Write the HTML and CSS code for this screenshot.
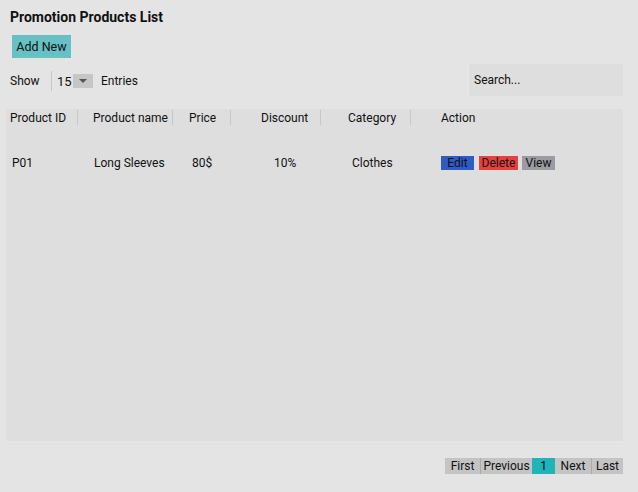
FILE: index.html
```html
<!DOCTYPE html>
<html>
<head>
<meta charset="utf-8">
<link rel="stylesheet" href="styles.css">
</head>
<body>
<div class="page">
  <h1 class="title">Promotion Products List</h1>
  <button class="add-btn">Add New</button>
  <div class="toolbar">
    <div class="show">
      <span class="show-label">Show</span>
      <span class="select"><span class="select-val">15</span><span class="select-arrow"><svg width="10" height="6" viewBox="0 0 10 6"><path d="M1 1h8L5 5z" fill="#555"/></svg></span></span>
      <span class="entries">Entries</span>
    </div>
    <div class="search">Search...</div>
  </div>
  <div class="table">
    <div class="row head">
      <div class="c c1 h1">Product ID</div>
      <div class="c c2 h2">Product name</div>
      <div class="c c3 h3">Price</div>
      <div class="c c4 h4">Discount</div>
      <div class="c c5 h5">Category</div>
      <div class="c c6 h6">Action</div>
    </div>
    <div class="row body-row">
      <div class="c c1 d1">P01</div>
      <div class="c c2 d2">Long Sleeves</div>
      <div class="c c3 d3">80$</div>
      <div class="c c4 d4">10%</div>
      <div class="c c5 d5">Clothes</div>
      <div class="c c6 d6">
        <span class="act edit">Edit</span>
        <span class="act del">Delete</span>
        <span class="act view">View</span>
      </div>
    </div>
  </div>
  <div class="pager">
    <span class="pg p-first">First</span><span class="pg p-prev">Previous</span><span class="pg cur">1</span><span class="pg p-next">Next</span><span class="pg p-last">Last</span>
  </div>
</div>
</body>
</html>
```
FILE: styles.css
```css
* { box-sizing: border-box; }
html, body { margin: 0; padding: 0; }
body {
  background: #e4e4e4;
  font-family: Roboto, "Liberation Sans", sans-serif;
  font-size: 12px;
  color: #111;
  width: 638px;
  height: 492px;
  overflow: hidden;
}
.page { padding: 8px 15px 0 6px; }
.title {
  margin: 0 0 0 4px;
  font-size: 14px;
  font-weight: bold;
  line-height: 18px;
  color: #111;
}
.add-btn {
  display: block;
  margin: 9px 0 0 6px;
  width: 59px;
  height: 23px;
  border: 0;
  background: #66c0c4;
  font-family: inherit;
  font-size: 12.5px;
  color: #111;
  padding: 0;
}
.toolbar {
  display: flex;
  justify-content: space-between;
  align-items: flex-start;
  margin-top: 6px;
}
.show {
  display: flex;
  align-items: center;
  margin-top: 7px;
  margin-left: 4px;
  height: 20px;
}
.show-label { width: 41px; }
.select {
  display: flex;
  align-items: center;
  border-left: 1px solid #c8c8c8;
  height: 20px;
  padding-left: 5px;
}
.select-val { font-size: 13px; width: 16px; }
.select-arrow {
  width: 20px;
  height: 14px;
  background: #c6c6c6;
  display: flex;
  align-items: center;
  justify-content: center;
}
.entries { margin-left: 8px; }
.search {
  width: 154px;
  height: 32px;
  background: #dedede;
  padding: 8px 5px;
  line-height: 16px;
}
.table {
  margin-top: 13px;
  height: 332px;
  background: #dedede;
}
.row { display: grid; grid-template-columns: 72px 95px 58px 90px 90px 1fr; }
.head { padding-top: 1px; height: 39px; }
.head .c {
  height: 15px;
  line-height: 17px;
  border-right: 1px solid #c8c8c8;
}
.head .c6 { border-right: 0; }
.h1 { padding-left: 4px; }
.h2 { padding-left: 15px; }
.h3 { padding-left: 16px; }
.h4 { padding-left: 30px; }
.h5 { padding-left: 27px; }
.h6 { padding-left: 30px; }
.body-row { height: 30px; align-items: center; }
.body-row .c { line-height: 14px; }
.d1 { padding-left: 6px; }
.d2 { padding-left: 16px; }
.d3 { padding-left: 19px; }
.d4 { padding-left: 43px; }
.d5 { padding-left: 31px; }
.d6 { padding-left: 30px; display: flex; align-items: center; }
.act {
  display: inline-block;
  height: 14px;
  line-height: 14px;
  text-align: center;
}
.edit { width: 33px; background: #2f5bc6; }
.del { width: 39px; background: #e8403f; margin-left: 5px; }
.view { width: 33px; background: #9a9ca1; margin-left: 4px; }
.pager {
  display: flex;
  justify-content: flex-end;
  margin-top: 17px;
  height: 16px;
}
.pg {
  background: #c4c4c4;
  line-height: 16px;
  text-align: center;
  border-left: 1px solid #ababab;
}
.p-first { width: 35px; border-left: 0; }
.p-prev { width: 52px; }
.pg.cur { background: #1fb4ba; width: 23px; border-left: 0; }
.p-next { width: 36px; border-left: 0; }
.p-last { width: 32px; }
```
